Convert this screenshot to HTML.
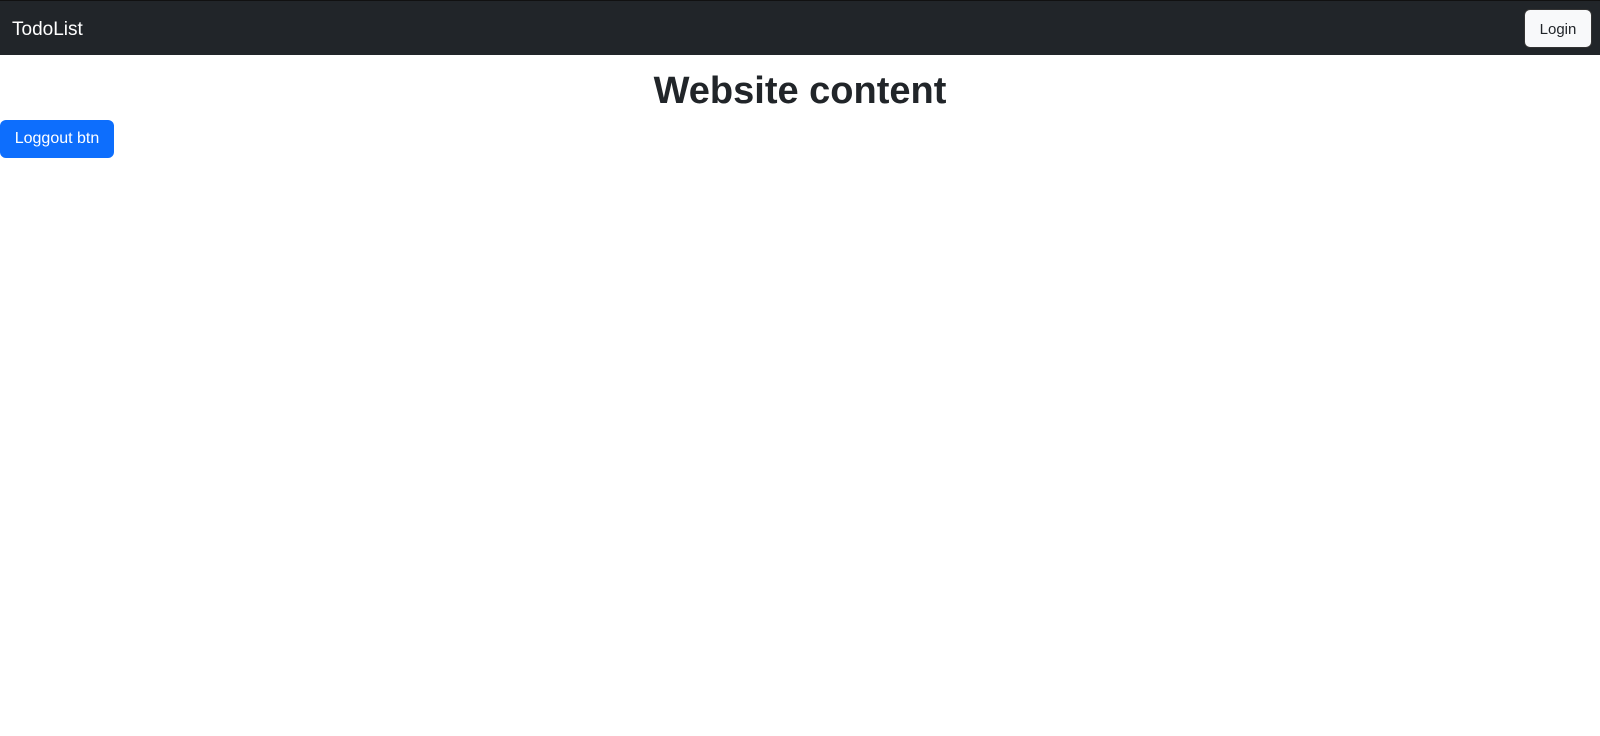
<!DOCTYPE html>
<html><head><style>
html,body{margin:0;padding:0;background:#fff;width:1600px;height:736px;overflow:hidden;font-family:"Liberation Sans",sans-serif;}
nav{position:absolute;left:0;top:0;width:1600px;height:55px;background:#212529;border-top:1px solid #111;box-sizing:border-box;}
.brand{position:absolute;left:12px;top:18px;color:#fff;font-size:19px;}
.login{position:absolute;right:8px;top:8px;width:68px;height:39px;background:#f8f9fa;border-radius:6px;color:#212529;font-size:15px;text-align:center;line-height:39px;box-sizing:border-box;border:1px solid #333;}
h1{position:absolute;left:0;width:1600px;top:67px;margin:0;text-align:center;font-size:38px;font-weight:bold;color:#212529;line-height:48px;}
.btn{position:absolute;left:0;top:120px;width:114px;height:38px;background:#0d6efd;color:#fff;border-radius:6px;font-size:16px;text-align:center;line-height:38px;}
</style></head><body>
<nav><div class="brand">TodoList</div><div class="login">Login</div></nav>
<h1>Website content</h1>
<div class="btn">Loggout btn</div>
</body></html>
